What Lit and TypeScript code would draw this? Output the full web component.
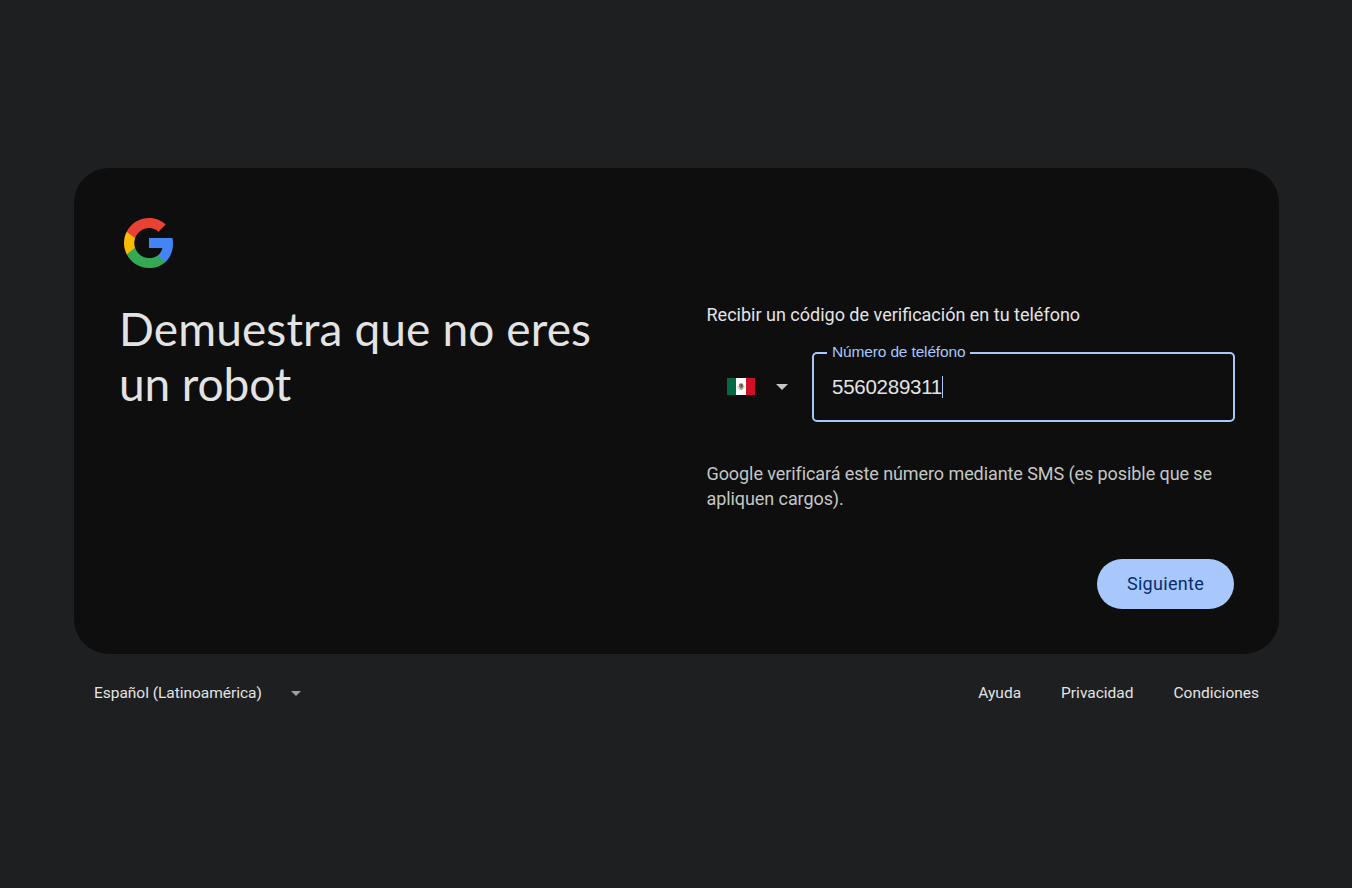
import { LitElement, html, css } from "lit";
import { customElement, property } from "lit/decorators.js";

@customElement("google-mark")
class GoogleMark extends LitElement {
  static styles = css`
    :host { display: block; width: 60px; height: 60px; }
    svg { display: block; width: 100%; height: 100%; }
  `;
  render() {
    return html`<svg viewBox="-4 0 48 48" aria-label="Google">
      <path fill="#4285F4" d="M39.2 24.45c0-1.55-.16-3.04-.43-4.45H20v8h10.73c-.45 2.53-1.86 4.68-4 6.11v5.05h6.5c3.78-3.48 5.97-8.62 5.97-14.71z"/>
      <path fill="#34A853" d="M20 44c5.4 0 9.92-1.79 13.24-4.84l-6.5-5.05C24.95 35.3 22.67 36 20 36c-5.19 0-9.59-3.51-11.15-8.23h-6.7v5.2C5.43 39.51 12.18 44 20 44z"/>
      <path fill="#FABB05" d="M8.85 27.77c-.4-1.19-.62-2.46-.62-3.77s.22-2.58.62-3.77v-5.2h-6.7C.78 17.73 0 20.77 0 24s.78 6.27 2.14 8.97l6.71-5.2z"/>
      <path fill="#E94235" d="M20 12c2.93 0 5.55 1.01 7.62 2.98l5.76-5.76C29.92 5.98 25.39 4 20 4 12.18 4 5.43 8.49 2.14 15.03l6.7 5.2C10.41 15.51 14.81 12 20 12z"/>
    </svg>`;
  }
}

@customElement("country-select")
class CountrySelect extends LitElement {
  static styles = css`
    :host { display: flex; align-items: center; height: 70px; width: 105.5px; padding-left: 20.5px; padding-bottom: 1px; box-sizing: border-box; }
    .flag { display: block; width: 28px; height: 17px; margin-right: 21px; }
    .arrow { display: block; width: 12px; height: 6px; margin-top: 1px; }
  `;
  render() {
    return html`
      <svg class="flag" viewBox="0 0 28 17" preserveAspectRatio="none">
        <rect width="28" height="17" fill="#fff"/>
        <rect width="9" height="17" fill="#006847"/>
        <rect x="19" width="9" height="17" fill="#ce1126"/>
        <path d="M10.6 7.8c.2 2.4 1.4 3.7 3.4 3.9 2-.2 3.1-1.5 3.3-3.7" fill="none" stroke="#b4bfa8" stroke-width=".9"/>
        <path d="M12 6.4c1-1.4 3-1.6 3.8-.4 1 1.2 1 2.9.1 4-.9.9-2.6.8-3.2-.1l-1-1.6z" fill="#8a765e"/>
        <path d="M13.9 6c.9 0 1.3.8 1.2 1.8l-1 1.1z" fill="#4a4338"/>
        <path d="M12 10.6h4l-.8 1h-2.4z" fill="#8fb0a6"/>
      </svg>
      <svg class="arrow" viewBox="0 0 12 6"><path d="M0 0h12L6 6z" fill="#c4c7c5"/></svg>`;
  }
}

@customElement("outlined-field")
class OutlinedField extends LitElement {
  @property() label = "";
  @property() value = "";
  static styles = css`
    :host { display: block; flex: 1; }
    .field {
      position: relative; display: flex; align-items: center; height: 70px; box-sizing: border-box;
      border: 2px solid #a8c7fa; border-radius: 5px; padding: 0 18px;
      font-family: "Liberation Sans", Arial, sans-serif;
    }
    .label {
      position: absolute; left: 13px; top: -12px; padding: 0 5px; background: #0e0e0e;
      color: #a8c7fa; font-size: 15.5px; line-height: 20px; letter-spacing: -0.15px; white-space: nowrap;
    }
    .value { color: #e3e3e3; font-size: 20.5px; line-height: 24px; letter-spacing: -0.25px; }
    .caret { width: 1px; height: 22px; background: #a8c7fa; }
  `;
  render() {
    return html`<div class="field">
      <span class="label">${this.label}</span>
      <span class="value">${this.value}</span><span class="caret"></span>
    </div>`;
  }
}

@customElement("app-root")
class AppRoot extends LitElement {
  static styles = css`
    :host {
      display: block; min-height: 888px; box-sizing: border-box; padding: 168px 73px 0 74px;
      background: #1e1f20; color: #e3e3e3; font-family: Roboto, "Liberation Sans", sans-serif;
    }
    .card {
      display: grid; grid-template-columns: 1fr 1fr; height: 486px; box-sizing: border-box;
      padding: 45px 44px 45px 45px; border-radius: 35px; background: #0e0e0e;
    }
    h1 {
      margin: 28px 0 0; font-family: Lato, sans-serif; font-size: 46px; line-height: 55px;
      font-weight: 400; letter-spacing: 0.13px; width: 520px;
    }
    .short { letter-spacing: -0.1px; }
    .form { display: flex; flex-direction: column; padding: 89px 0 0 29.5px; }
    .prompt { font-size: 18px; line-height: 25px; }
    .phone { display: flex; margin-top: 25px; }
    .note { margin: 39px 0 0; font-size: 18px; line-height: 25px; color: #c4c7c5; letter-spacing: -0.08px; }
    .next {
      align-self: flex-end; width: 137px; height: 50px; margin: auto 1px 0 0; padding: 0 0 2px; border: 0; border-radius: 25px;
      background: #a8c7fa; color: #062e6f; font: 400 18px/25px Roboto, sans-serif; letter-spacing: 0.3px;
    }
    .footer {
      display: flex; justify-content: space-between; padding: 29px 20px 0;
      font-size: 15.5px; line-height: 20px; font-weight: 400;
    }
    .language { display: flex; align-items: center; gap: 29px; letter-spacing: -0.03px; }
    .arrow { width: 10px; height: 5px; display: block; }
    .links { display: flex; gap: 40px; letter-spacing: 0; }
  `;
  render() {
    return html`
      <main class="card">
        <div>
          <google-mark></google-mark>
          <h1>Demuestra que no eres<br><span class="short">un robot</span></h1>
        </div>
        <div class="form">
          <div class="prompt">Recibir un código de verificación en tu teléfono</div>
          <div class="phone">
            <country-select></country-select>
            <outlined-field label="Número de teléfono" value="5560289311"></outlined-field>
          </div>
          <p class="note">Google verificará este número mediante SMS (es posible que se<br>apliquen cargos).</p>
          <button class="next">Siguiente</button>
        </div>
      </main>
      <footer class="footer">
        <div class="language">
          <span>Español (Latinoamérica)</span>
          <svg class="arrow" viewBox="0 0 10 5"><path d="M0 0h10L5 5z" fill="#9aa0a6"/></svg>
        </div>
        <nav class="links"><span>Ayuda</span><span>Privacidad</span><span>Condiciones</span></nav>
      </footer>`;
  }
}
